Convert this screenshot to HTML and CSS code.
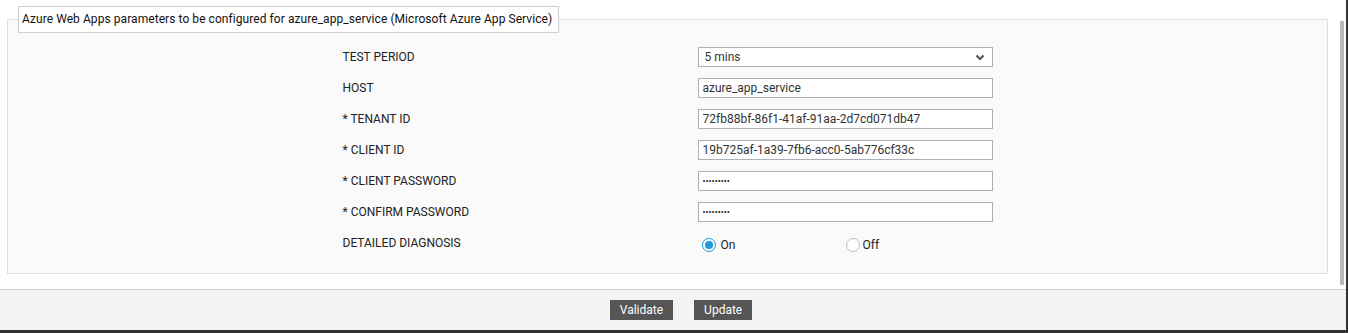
FILE: index.html
```html
<!DOCTYPE html>
<html lang="en">
<head>
  <meta charset="UTF-8">
  <title>Azure Web Apps parameters</title>
  <link rel="stylesheet" href="styles.css">
</head>
<body>
  <div class="page">
    <div class="main">
      <div class="content">
        <fieldset class="params">
          <legend>Azure Web Apps parameters to be configured for azure_app_service (Microsoft Azure App Service)</legend>
          <div class="form-grid">
            <label class="lbl">TEST PERIOD</label>
            <div class="select-wrap">
              <select class="field sel">
                <option>5 mins</option>
              </select>
              <svg class="arrow" width="10" height="7" viewBox="0 0 10 7"><path d="M1.5 1.5 L5 5 L8.5 1.5" fill="none" stroke="#555" stroke-width="2.2"/></svg>
            </div>

            <label class="lbl">HOST</label>
            <input class="field" type="text" value="azure_app_service">

            <label class="lbl">* TENANT ID</label>
            <input class="field" type="text" value="72fb88bf-86f1-41af-91aa-2d7cd071db47">

            <label class="lbl">* CLIENT ID</label>
            <input class="field" type="text" value="19b725af-1a39-7fb6-acc0-5ab776cf33c">

            <label class="lbl">* CLIENT PASSWORD</label>
            <input class="field pwd" type="password" value="secretpw1">

            <label class="lbl">* CONFIRM PASSWORD</label>
            <input class="field pwd" type="password" value="secretpw1">

            <label class="lbl">DETAILED DIAGNOSIS</label>
            <div class="radios">
              <label class="opt"><span class="radio on"></span>On</label>
              <label class="opt off-opt"><span class="radio"></span>Off</label>
            </div>
          </div>
        </fieldset>
      </div>
      <div class="scroll">
        <div class="thumb"></div>
      </div>
    </div>
    <div class="footer">
      <button class="btn">Validate</button>
      <button class="btn">Update</button>
    </div>
  </div>
</body>
</html>
```

FILE: styles.css
```css
body {
  margin: 0;
  font-family: Roboto, "Liberation Sans", sans-serif;
  font-size: 12px;
  color: #222;
  background: #fff;
}
.page {
  width: 1348px;
  height: 333px;
  box-sizing: border-box;
  border-right: 2px solid #333;
  border-bottom: 3px solid #333;
  display: flex;
  flex-direction: column;
}
.main {
  height: 289px;
  border-bottom: 1px solid #cfcfcf;
  display: flex;
}
.content {
  flex: 1;
}
.params {
  margin: 6px 7px 0 7px;
  padding: 0 0 20px 0;
  border: 1px solid #dedede;
  background: #fafafa;
}
.params legend {
  margin-left: 10px;
  padding: 5px 6px 6px 3px;
  background: #fff;
  border: 1px solid #cfcfcf;
  font-size: 12px;
  letter-spacing: 0.065px;
  color: #111;
}
.form-grid {
  width: 650px;
  margin: 14px auto 0 auto;
  display: grid;
  grid-template-columns: 355px 295px;
  grid-auto-rows: 20px;
  row-gap: 11px;
  align-items: center;
}
.lbl {
  color: #222;
}
.field {
  box-sizing: border-box;
  width: 295px;
  height: 20px;
  margin: 0;
  padding: 0 4px;
  border: 1px solid #a9b0ba;
  border-radius: 0;
  background: #fff;
  font-family: Roboto, "Liberation Sans", sans-serif;
  font-size: 12px;
  color: #333;
  outline: none;
}
.pwd {
  font-size: 9px;
  color: #111;
}
.select-wrap {
  position: relative;
  height: 20px;
}
.sel {
  appearance: none;
  -webkit-appearance: none;
  padding-left: 6px;
}
.arrow {
  position: absolute;
  right: 8px;
  top: 7px;
  pointer-events: none;
}
.radios {
  display: flex;
  height: 20px;
  align-items: center;
  padding-top: 4px;
}
.opt {
  display: flex;
  align-items: center;
  width: 148px;
  padding-left: 4px;
  box-sizing: border-box;
  color: #222;
}
.off-opt {
  width: auto;
  padding-left: 0;
}
.radio {
  box-sizing: border-box;
  width: 14px;
  height: 14px;
  border-radius: 50%;
  border: 1px solid #b9bec6;
  background: #fff;
  margin-right: 4px;
  position: relative;
}
.radio.on {
  border-color: #1a9ad6;
  margin-right: 5px;
}
.radio.on::after {
  content: "";
  position: absolute;
  left: 2px;
  top: 2px;
  width: 8px;
  height: 8px;
  border-radius: 50%;
  background: #1a9ad6;
}
.off-opt .radio {
  margin-right: 3px;
}
.scroll {
  width: 11px;
  padding: 21px 2px 4px 5px;
  box-sizing: border-box;
}
.thumb {
  width: 4px;
  height: 100%;
  background: #bbb;
}
.footer {
  flex: 1;
  background: #f4f4f4;
  display: flex;
  justify-content: center;
  align-items: center;
  gap: 21px;
  padding-left: 16px;
}
.btn {
  height: 20px;
  padding: 0 10px;
  border: none;
  border-radius: 0;
  background: #555;
  color: #fff;
  font-family: Roboto, "Liberation Sans", sans-serif;
  font-size: 12px;
  cursor: pointer;
}
```
